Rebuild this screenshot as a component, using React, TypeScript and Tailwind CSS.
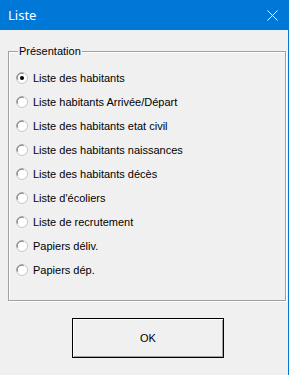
import React from "react";

const items = [
  "Liste des habitants",
  "Liste habitants Arrivée/Départ",
  "Liste des habitants etat civil",
  "Liste des habitants naissances",
  "Liste des habitants décès",
  "Liste d'écoliers",
  "Liste de recrutement",
  "Papiers déliv.",
  "Papiers dép.",
];

function Radio({ checked }: { checked: boolean }) {
  return (
    <svg width="12" height="12" viewBox="0 0 12 12" className="shrink-0">
      <circle cx="6" cy="6" r="5.5" fill="#ffffff" stroke="#c4c4c4" strokeWidth="1" />
      <path d="M1.2 7.5 A5 5 0 0 1 7.5 1.2" fill="none" stroke="#8a8a8a" strokeWidth="1" />
      <path d="M2 7.8 A4.2 4.2 0 0 1 7.8 2" fill="none" stroke="#5a5a5a" strokeWidth="0.8" opacity="0.5" />
      {checked && <circle cx="6" cy="6" r="2" fill="#000000" />}
    </svg>
  );
}

export default function App() {
  return (
    <div
      className="w-[289px] h-[375px] bg-[#f0f0f0] border-r border-[#0078d7] flex flex-col overflow-hidden"
      style={{ fontFamily: '"Liberation Sans", Arial, sans-serif' }}
    >
      <div className="h-[30px] bg-[#0078d7] flex items-center justify-between pl-[8px] pr-[10px] shrink-0">
        <span
          className="text-white text-[13px] leading-none"
          style={{ fontFamily: '"Noto Sans", "Open Sans", sans-serif' }}
        >
          Liste
        </span>
        <svg width="11" height="11" viewBox="0 0 11 11">
          <path d="M0.5 0.5 L10.5 10.5 M10.5 0.5 L0.5 10.5" stroke="#ffffff" strokeWidth="1" />
        </svg>
      </div>

      <div className="relative ml-[8px] mt-[21px] w-[278px] h-[250px] border border-[#a0a0a0] shadow-[inset_1px_1px_0_#ffffff,1px_1px_0_#ffffff] shrink-0">
        <span className="absolute left-[9px] top-[-8px] px-[1px] bg-[#f0f0f0] text-[11px] leading-[14px] text-black">
          Présentation
        </span>
        <div className="flex flex-col pt-[14px] pl-[7px]">
          {items.map((t, i) => (
            <div key={t} className="h-[24px] flex items-center gap-[5px]">
              <Radio checked={i === 0} />
              <span className="text-[11px] leading-[14px] text-black whitespace-nowrap">{t}</span>
            </div>
          ))}
        </div>
      </div>

      <div className="ml-[72px] mt-[17px] w-[152px] h-[40px] border border-black shrink-0">
        <div className="w-full h-full bg-[#f0f0f0] shadow-[inset_1px_1px_0_#ffffff,inset_-1px_-1px_0_#a0a0a0] flex items-center justify-center text-[11px] text-black">
          OK
        </div>
      </div>
    </div>
  );
}
